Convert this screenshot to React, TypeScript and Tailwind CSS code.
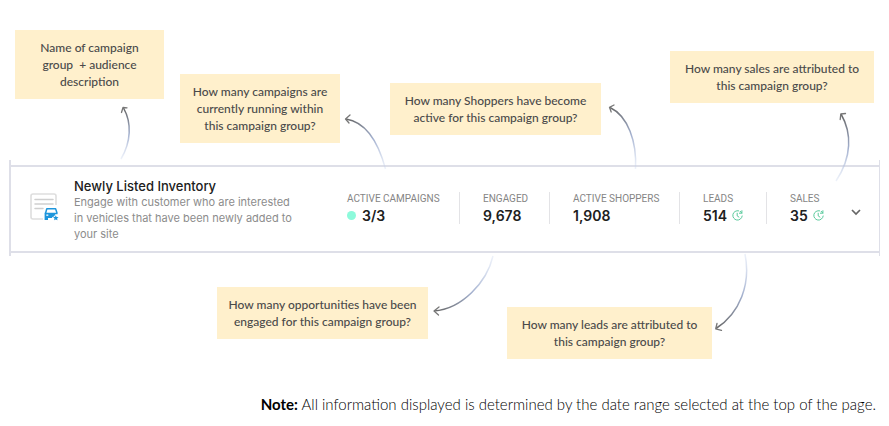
import React from "react";

type CalloutProps = {
  className: string;
  arrowClassName: string;
  viewBox: string;
  curve: string;
  head: string;
  id: string;
  from: [number, number];
  to: [number, number];
  children: React.ReactNode;
};

function Callout({ className, arrowClassName, viewBox, curve, head, id, from, to, children }: CalloutProps) {
  return (
    <aside className={`relative shrink-0 bg-[#fff0cc] text-center font-['Lato',sans-serif] text-xs leading-[17px] font-medium whitespace-nowrap text-[#4a4a4a] ${className}`}>
      <p>{children}</p>
      <svg className={`pointer-events-none absolute z-10 ${arrowClassName}`} viewBox={viewBox} fill="none" aria-hidden="true">
        <defs>
          <linearGradient id={id} gradientUnits="userSpaceOnUse" x1={from[0]} y1={from[1]} x2={to[0]} y2={to[1]}>
            <stop offset="0" stopColor="#c5d2ec" stopOpacity="0.3" />
            <stop offset="0.5" stopColor="#a3b0ce" />
            <stop offset="1" stopColor="#666666" />
          </linearGradient>
        </defs>
        <path d={curve} stroke={`url(#${id})`} strokeWidth="1.5" />
        <path d={head} stroke="#777777" strokeWidth="1.3" strokeLinecap="round" strokeLinejoin="round" />
      </svg>
    </aside>
  );
}

function ListingIcon() {
  return (
    <svg className="mt-[15px] h-[30px] w-[30px] shrink-0" viewBox="0 0 30 30" fill="none" aria-hidden="true">
      <path d="M13 26H3a2 2 0 0 1-2-2V3a2 2 0 0 1 2-2h21a2 2 0 0 1 2 2v9" stroke="#dedede" strokeWidth="1.6" />
      <path d="M5 6.5h18M5 11h18M5 15.5h8" stroke="#cfcfcf" strokeWidth="1.5" strokeLinecap="round" />
      <path d="M15.5 20.5 16.8 15.8h8.8l1.4 4.2" stroke="#1e96dc" strokeWidth="1.5" strokeLinejoin="round" />
      <path d="M14.6 19.8h13v1.4h-2.2l-1.4 2.2-1.6.6-.4 1h-4V27h-3.4z" fill="#1e96dc" />
      <path d="M16.3 21.5h2v1.3h-2z" fill="white" />
      <path d="m25.8 22.2.8 1.7 1.9.2-1.4 1.3.4 1.9-1.7-.9-1.7.9.4-1.9-1.4-1.3 1.9-.2z" fill="#1e96dc" />
    </svg>
  );
}

function ClockIcon() {
  return (
    <svg className="h-[11px] w-[11px]" viewBox="0 0 11 11" fill="none" stroke="#58c99b" strokeWidth="1" strokeLinecap="round" aria-hidden="true">
      <path d="M6.6.8A4.7 4.7 0 1 0 10.2 6" />
      <path d="M7.4 3.2h2.5V.7M9.8 3.1 8.2 1.3M5.2 3.2v2.7l1.7 1.2" />
    </svg>
  );
}

function Stat({ label, value, className, dot, clock }: { label: string; value: string; className: string; dot?: boolean; clock?: boolean }) {
  return (
    <div className={`h-8 shrink-0 whitespace-nowrap ${className}`}>
      <dt className="font-['Roboto',sans-serif] text-[10px] leading-[13px] text-[#858585]">{label}</dt>
      <dd className="flex h-[21px] items-center gap-[5px] text-sm font-semibold text-[#202020]">
        {dot && <span className="mr-px h-[9px] w-[9px] rounded-full bg-[#8dfadb]" />}
        {value}
        {clock && <ClockIcon />}
      </dd>
    </div>
  );
}

export default function App() {
  return (
    <main className="bg-white pb-3 font-['Inter',sans-serif]">
      <div className="flex h-[165px] items-start pr-[15px] pl-[15px]">
        <Callout className="mt-[30px] w-[149px] py-[9px]" arrowClassName="top-[70px] left-[100px] h-[62px] w-5" viewBox="115 100 20 62"
          id="name" from={[121, 159]} to={[124, 108]} curve="M121 159C131 142 132 123 123.5 108" head="M121.5 112.5 123 107.5 127 107.8">
          Name of campaign<br />group &nbsp;+ audience<br />description
        </Callout>
        <Callout className="mt-[74px] ml-4 w-40 py-[9px]" arrowClassName="top-9 left-40 h-[60px] w-[50px]" viewBox="340 110 50 60"
          id="campaigns" from={[386, 169]} to={[346, 119]} curve="M385.5 169C378 141 365 122 346 119" head="M350 115 345.5 119 349 123">
          How many campaigns are<br />currently running within<br />this campaign group?
        </Callout>
        <Callout className="mt-[83px] ml-[50px] w-[211px] py-[9px]" arrowClassName="top-[17px] left-[215px] h-[70px] w-[35px]" viewBox="605 100 35 70"
          id="shoppers" from={[636, 169]} to={[610, 107]} curve="M635.5 169C637 142 628 116 610 107.5" head="M614 105 609.5 107.3 611.2 112">
          How many Shoppers have become<br />active for this campaign group?
        </Callout>
        <Callout className="mt-[51px] ml-auto w-[204px] py-[9px]" arrowClassName="top-[57px] left-[162px] h-[76px] w-[22px]" viewBox="832 108 22 76"
          id="sales" from={[836, 181]} to={[841, 114]} curve="M836 181C852 157 852 133 841 114" head="M840.2 119.5 840.8 114 845.5 113.5">
          How many sales are attributed to<br />this campaign group?
        </Callout>
      </div>

      <section className="relative mx-[9px] flex h-[88px] items-start border-y-2 border-[#dedfe8] pt-[11px] pl-[21px]" aria-label="Newly Listed Inventory">
        <span className="absolute -top-[7px] -bottom-[5px] left-0 w-0.5 bg-[#dedfe8]" />
        <span className="absolute -top-[7px] -bottom-[5px] right-0 w-px bg-[#dedfe8]" />
        <ListingIcon />
        <div className="ml-3.5 w-[230px] shrink-0">
          <h2 className="text-[13px] leading-4 font-medium text-[#202020]">Newly Listed Inventory</h2>
          <p className="text-[11px] leading-4 text-[#8c8c8c]">
            Engage with customer who are interested<br />in vehicles that have been newly added to<br />your site
          </p>
        </div>
        <dl className="mt-3.5 ml-auto flex">
          <Stat className="w-28" label="ACTIVE CAMPAIGNS" value="3/3" dot />
          <Stat className="w-[90px] border-l border-[#e3e3e6] pl-[23px]" label="ENGAGED" value="9,678" />
          <Stat className="w-[130px] border-l border-[#e3e3e6] pl-[23px]" label="ACTIVE SHOPPERS" value="1,908" />
          <Stat className="w-[87px] border-l border-[#e3e3e6] pl-[23px]" label="LEADS" value="514" clock />
          <Stat className="w-[82px] border-l border-[#e3e3e6] pl-[23px]" label="SALES" value="35" clock />
        </dl>
        <button type="button" aria-label="Expand campaign group" className="mt-[26px] mr-4 flex h-4 w-4 items-center justify-center">
          <svg className="h-2 w-2.5" viewBox="0 0 10 8" fill="none" stroke="#666666" strokeWidth="1.7" aria-hidden="true">
            <path d="m1 2 4 4 4-4" />
          </svg>
        </button>
      </section>

      <div className="flex h-[142px] items-start pl-[217px]">
        <Callout className="mt-[34px] w-[211px] py-[9px]" arrowClassName="-top-[33px] left-[213px] h-[66px] w-[66px]" viewBox="430 254 66 66"
          id="engaged" from={[493, 256]} to={[434, 311]} curve="M493 256C487 282 462 309 434 311" head="M439 307 434 311 438.5 315">
          How many opportunities have been<br />engaged for this campaign group?
        </Callout>
        <Callout className="mt-[54px] ml-[79px] w-[205px] py-[9px]" arrowClassName="-top-[55px] left-[205px] h-[82px] w-10" viewBox="712 252 40 82"
          id="leads" from={[746, 253]} to={[716, 329]} curve="M745 254C751 284 740 313 716 328.5" head="M717 323.5 715.7 328.8 721.5 330.3">
          How many leads are attributed to<br />this campaign group?
        </Callout>
      </div>

      <p className="pr-[13px] text-right font-['Lato',sans-serif] text-[15px] leading-[18px] font-light whitespace-nowrap text-black">
        <strong className="font-bold text-black">Note:</strong> All information displayed is determined by the date range selected at the top of the page.
      </p>
    </main>
  );
}
